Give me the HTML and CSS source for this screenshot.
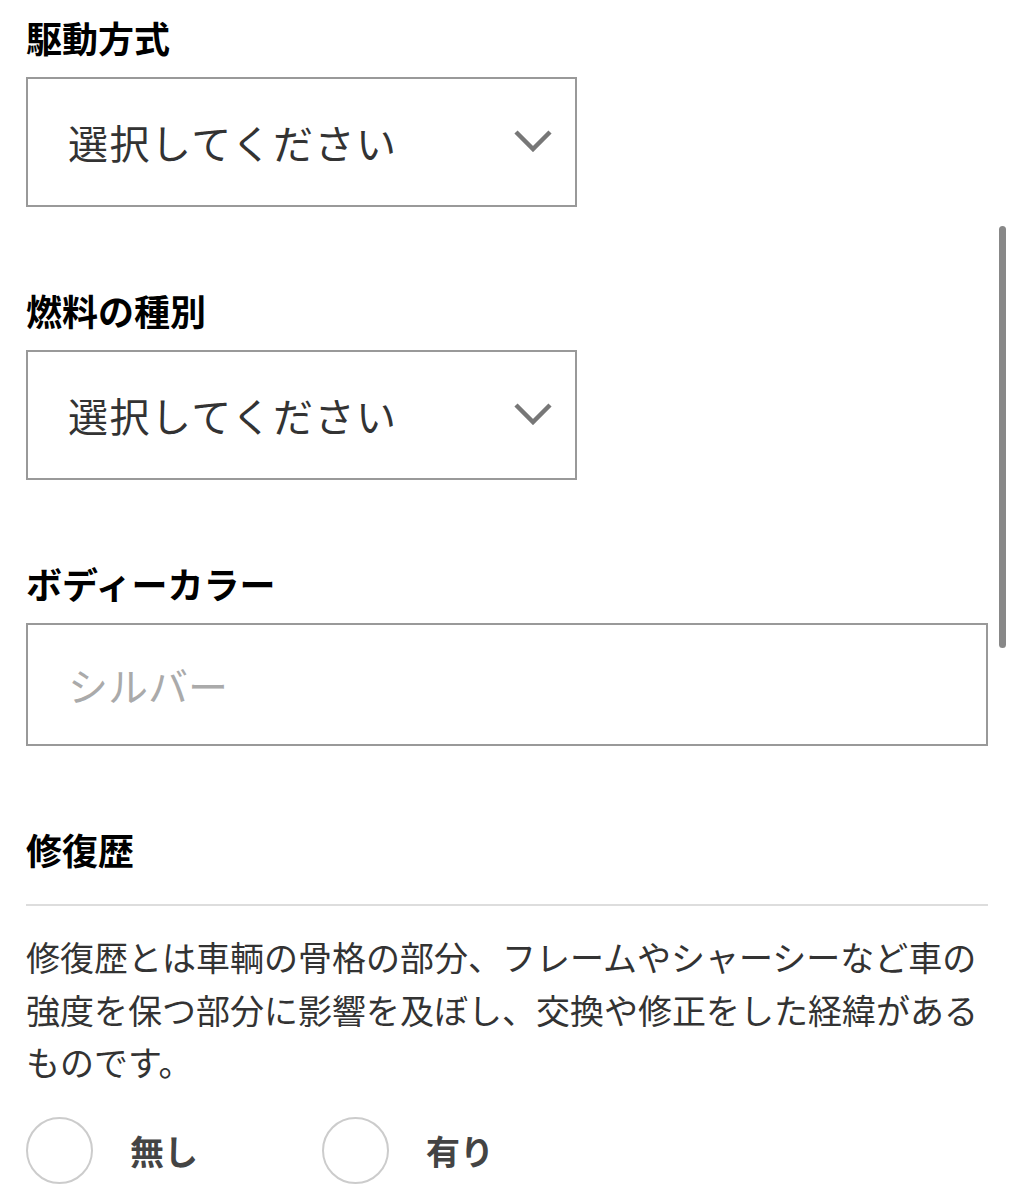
FILE: index.html
```html
<!DOCTYPE html>
<html lang="ja">
<head>
<meta charset="utf-8">
<link rel="stylesheet" href="styles.css">
</head>
<body>
<div class="page">
  <div class="field">
    <div class="label">駆動方式</div>
    <div class="select">
      <span class="select-text">選択してください</span>
      <svg class="chev" width="38" height="22" viewBox="0 0 38 22"><polyline points="2,2 19,19 36,2" fill="none" stroke="#777" stroke-width="4.5"/></svg>
    </div>
  </div>
  <div class="field">
    <div class="label">燃料の種別</div>
    <div class="select">
      <span class="select-text">選択してください</span>
      <svg class="chev" width="38" height="22" viewBox="0 0 38 22"><polyline points="2,2 19,19 36,2" fill="none" stroke="#777" stroke-width="4.5"/></svg>
    </div>
  </div>
  <div class="field">
    <div class="label">ボディーカラー</div>
    <div class="input"><span class="placeholder">シルバー</span></div>
  </div>
  <div class="field last">
    <div class="label">修復歴</div>
    <div class="divider"></div>
    <p class="desc">修復歴とは車輌の骨格の部分、フレームやシャーシーなど車の強度を保つ部分に影響を及ぼし、交換や修正をした経緯があるものです。</p>
    <div class="radios">
      <div class="radio"><span class="circle"></span><span class="rlabel">無し</span></div>
      <div class="radio"><span class="circle"></span><span class="rlabel">有り</span></div>
    </div>
  </div>
</div>
<div class="scrollbar"></div>
</body>
</html>
```

FILE: styles.css
```css
html, body {
  margin: 0;
  padding: 0;
  background: #fff;
}
body {
  font-family: "Noto Sans CJK JP", "Noto Sans", sans-serif;
  color: #333;
  overflow: hidden;
}
.page {
  padding: 10px 26px 0 26px;
}
.field {
  margin-bottom: 76px;
}
.field.last {
  margin-bottom: 0;
}
.label {
  font-size: 36px;
  font-weight: 700;
  line-height: 54px;
  color: #000;
  margin-bottom: 13px;
}
.select {
  height: 126px;
  border: 2px solid #999;
  display: flex;
  align-items: center;
  justify-content: space-between;
  padding: 0 23px 0 40px;
  box-sizing: content-box;
  width: 484px;
}
.select-text {
  font-size: 40px;
  color: #333;
  letter-spacing: 1.5px;
}
.chev {
  display: block;
  margin-top: -2px;
}
.input {
  height: 119px;
  border: 2px solid #999;
  display: flex;
  align-items: center;
  padding-left: 40px;
  width: 918px;
}
.placeholder {
  font-size: 40px;
  color: #aaa;
}
.divider {
  height: 2px;
  background: #ddd;
  margin-top: 28px;
  width: 962px;
}
.desc {
  margin: 25px 0 0 0;
  font-size: 34px;
  line-height: 52.5px;
  color: #333;
  width: 962px;
}
.radios {
  display: flex;
  margin-top: 28px;
}
.radio {
  display: flex;
  align-items: center;
  width: 296px;
}
.circle {
  width: 63px;
  height: 63px;
  border: 2px solid #ccc;
  border-radius: 50%;
  margin-right: 37px;
}
.rlabel {
  font-size: 34px;
  font-weight: 700;
  color: #444;
}
.scrollbar {
  position: absolute;
  left: 999px;
  top: 226px;
  width: 7px;
  height: 422px;
  background: #888;
  border-radius: 4px;
}
```
